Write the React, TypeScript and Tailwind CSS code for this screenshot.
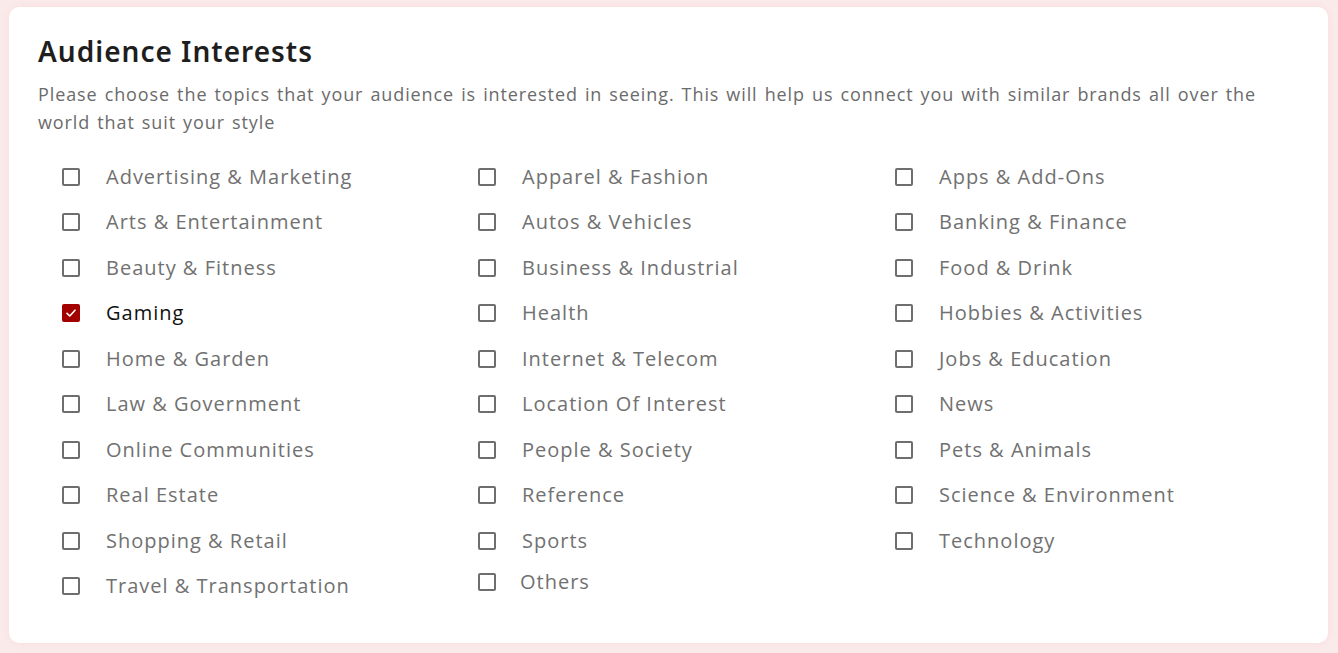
import React, { useState } from "react";

const items = [
  "Advertising & Marketing", "Apparel & Fashion", "Apps & Add-Ons",
  "Arts & Entertainment", "Autos & Vehicles", "Banking & Finance",
  "Beauty & Fitness", "Business & Industrial", "Food & Drink",
  "Gaming", "Health", "Hobbies & Activities",
  "Home & Garden", "Internet & Telecom", "Jobs & Education",
  "Law & Government", "Location Of Interest", "News",
  "Online Communities", "People & Society", "Pets & Animals",
  "Real Estate", "Reference", "Science & Environment",
  "Shopping & Retail", "Sports", "Technology",
  "Travel & Transportation", "Others",
];

function Box({ checked }: { checked: boolean }) {
  return checked ? (
    <span className="flex h-[18px] w-[18px] shrink-0 items-center justify-center rounded-[2px] bg-[#a30000]">
      <svg width="12" height="12" viewBox="0 0 12 12" fill="none">
        <path d="M2 6.3 L4.8 9 L10 3.2" stroke="white" strokeWidth="1.6" strokeLinecap="round" strokeLinejoin="round" />
      </svg>
    </span>
  ) : (
    <span className="block h-[18px] w-[18px] shrink-0 rounded-[2px] border-2 border-[#6e6e6e] bg-white" />
  );
}

export default function App() {
  const [checked, setChecked] = useState<Record<string, boolean>>({ Gaming: true });
  return (
    <div className="min-h-[653px] w-full bg-[#fbeaea] pt-[7px] pl-[9px] pr-[10px] pb-[10px]" style={{ fontFamily: '"Open Sans", "Liberation Sans", sans-serif' }}>
      <div className="h-[636px] rounded-[10px] bg-white pt-[26px] pl-[29px] pr-[30px] shadow-[0_0_6px_rgba(220,150,150,0.15)]">
        <h1 className="text-[28px] leading-[36px] font-semibold text-[#1e1e1e] tracking-[1px]" style={{ fontFamily: '"Noto Sans", "Open Sans", sans-serif' }}>
          Audience Interests
        </h1>
        <p className="mt-[11px] text-[18px] leading-[28px] text-[#6b6b6b] tracking-[0.9px] [word-spacing:1.5px]">
          Please choose the topics that your audience is interested in seeing. This will help us connect you with similar brands all over the world that suit your style
        </p>
        <div className="mt-[18px] ml-[24px] grid grid-cols-[416px_417px_1fr]">
          {items.map((it) => {
            const isChecked = !!checked[it];
            const others = it === "Others";
            return (
              <label
                key={it}
                className={`flex h-[45.5px] cursor-pointer items-center ${others ? "pb-[9px]" : ""}`}
                onClick={() => setChecked((c) => ({ ...c, [it]: !c[it] }))}
              >
                <Box checked={isChecked} />
                <span
                  className={`${others ? "ml-[24px]" : "ml-[26px]"} text-[20px] tracking-[1px] ${isChecked ? "text-[#111111]" : "text-[#717171]"}`}
                >
                  {it}
                </span>
              </label>
            );
          })}
        </div>
      </div>
    </div>
  );
}
